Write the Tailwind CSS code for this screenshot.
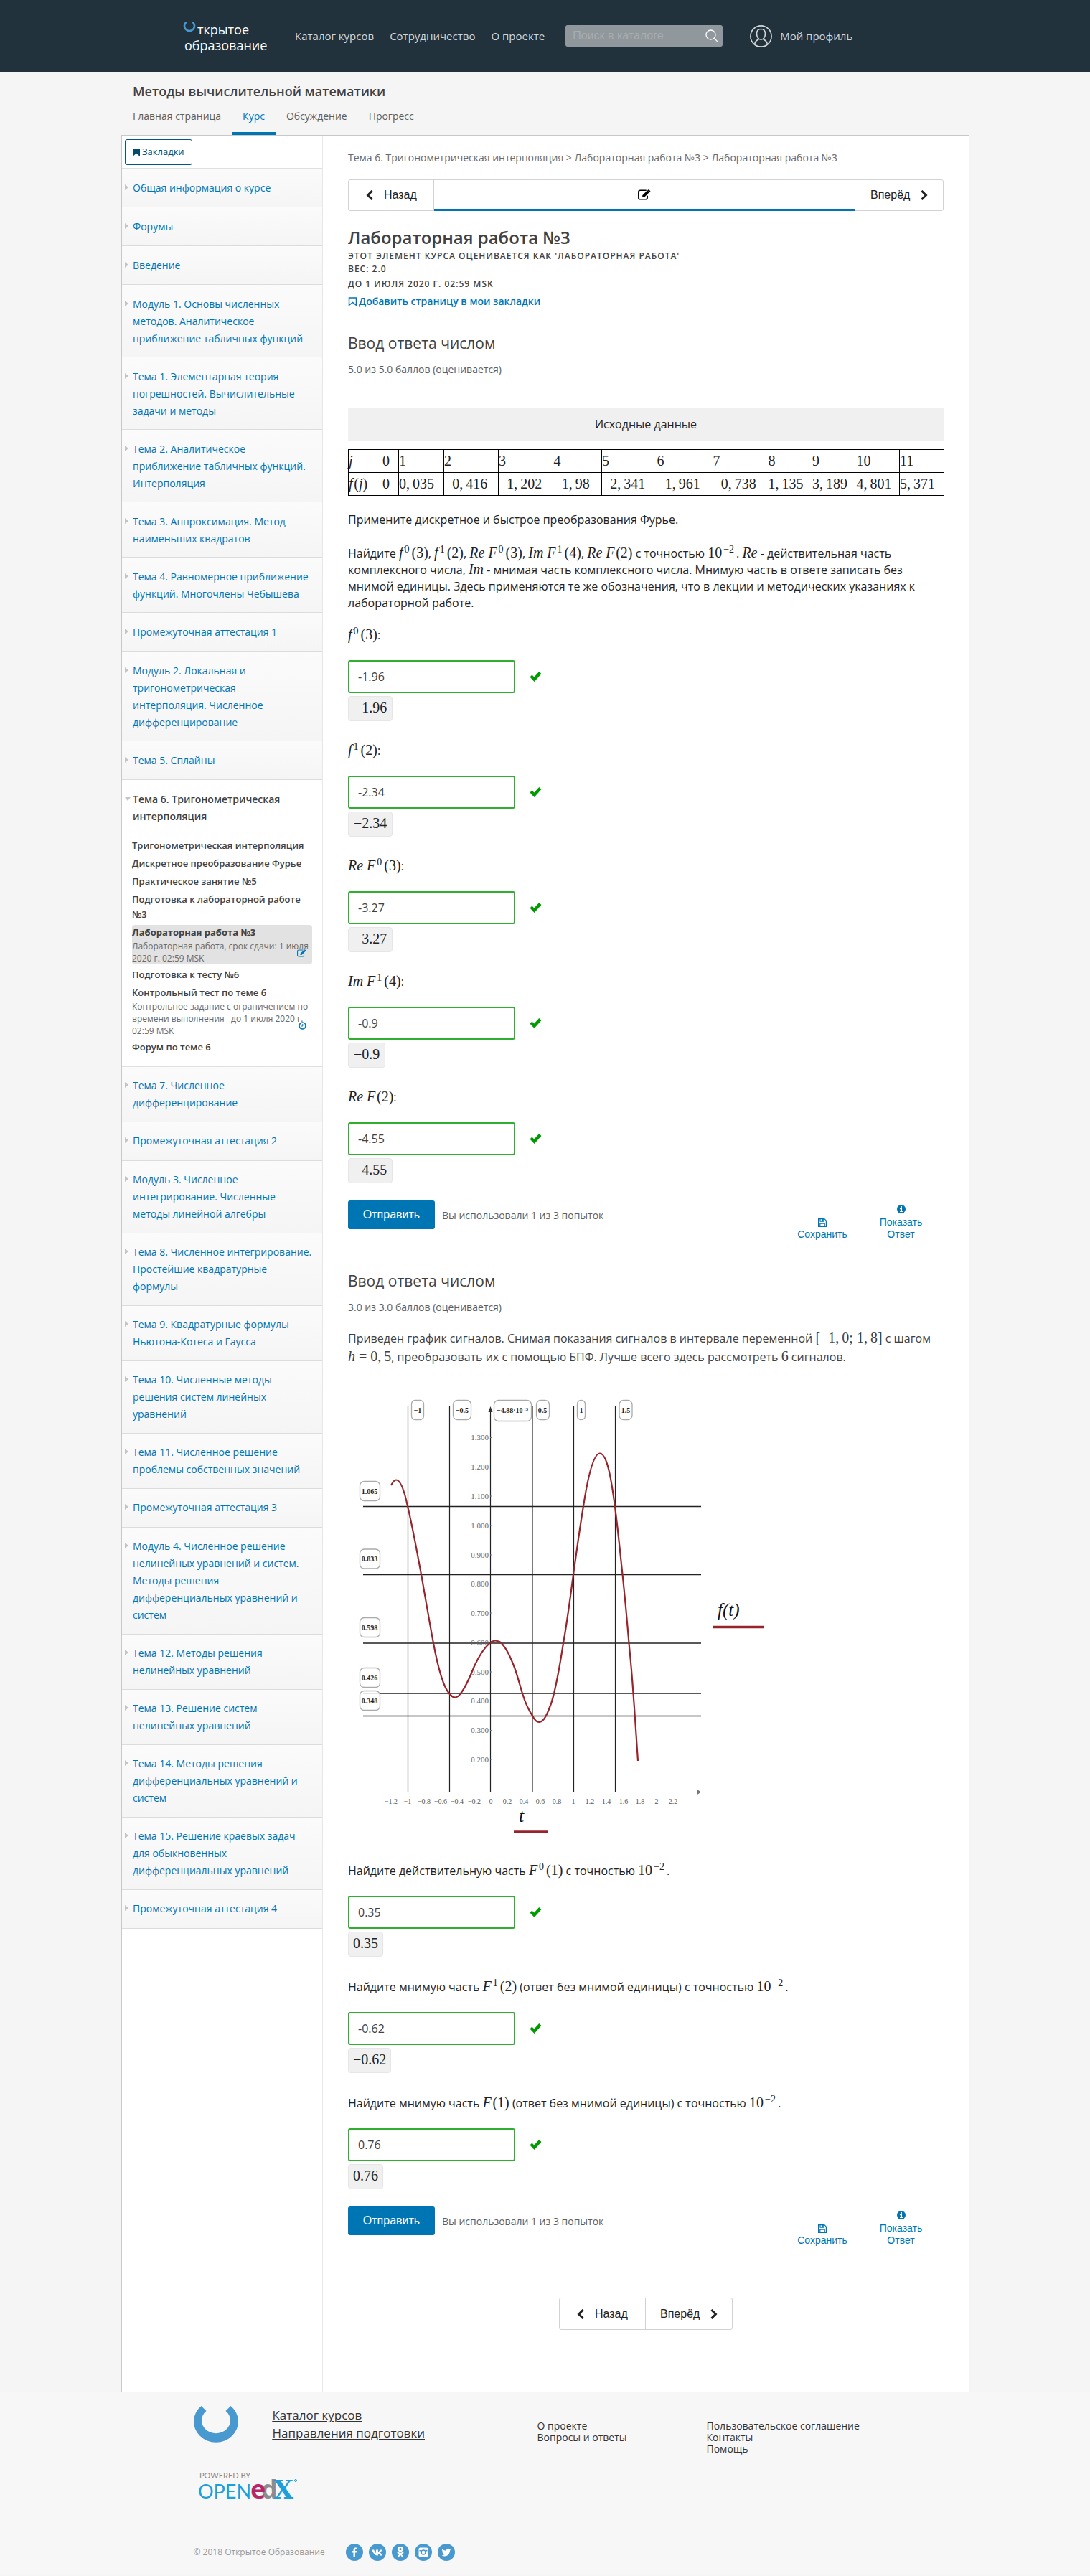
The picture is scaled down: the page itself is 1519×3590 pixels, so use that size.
<!DOCTYPE html>
<html lang="ru">
<head>
<meta charset="utf-8">
<meta name="viewport" content="width=device-width, initial-scale=1">
<title>Лабораторная работа №3 | Методы вычислительной математики</title>
<script src="https://cdn.jsdelivr.net/npm/@tailwindcss/browser@4"></script>
</head>
<body class="bg-[#f5f5f5] font-['Open_Sans','Noto_Sans',sans-serif] text-[#222]">

<!-- Shared icons -->
<svg class="hidden" aria-hidden="true">
  <symbol id="check" viewBox="0 0 17 14"><path d="M.5 7.600 3.400 4.600 6.400 7.400 13.200 0 16.500 3 6.600 14Z" fill="#009b00"/></symbol>
  <symbol id="left" viewBox="0 0 10 14"><path d="M8.6 1 2.6 7l6 6" fill="none" stroke="currentColor" stroke-width="3"/></symbol>
  <symbol id="right" viewBox="0 0 10 14"><path d="M1.4 1l6 6-6 6" fill="none" stroke="currentColor" stroke-width="3"/></symbol>
  <symbol id="edit" viewBox="0 0 18 15"><path d="M13.2 8.8v2.6a2.4 2.4 0 0 1-2.4 2.4H3.2A2.4 2.4 0 0 1 .8 11.400V3.600A2.400 2.400 0 0 1 3.200 1.200h7.200q.7 0 1.300.3" fill="none" stroke="currentColor" stroke-width="1.500"/><path d="M6.200 8.300 13.200 1.300l2.600 2.600-7 7H6.200ZM14 .6q.8-.8 1.600 0l1.400 1.400q.8.8 0 1.600l-.7.6L13.400 1.200Z" fill="currentColor"/></symbol>
  <symbol id="save" viewBox="0 0 12 12"><path d="M.6.6h8.200l2.600 2.600v8.200H.6ZM3 .6v3.600h5V.6M2.800 11.400V7.200h6.400v4.200" fill="none" stroke="currentColor" stroke-width="1.200"/><path d="M6 1h1.400v2.500H6z" fill="currentColor"/></symbol>
  <symbol id="info" viewBox="0 0 12 12"><circle cx="6" cy="6" r="6" fill="currentColor"/><path d="M5 2h2v1.700H5zM4 4.900h3v3.700h1V10H4V8.600h1V6.200H4z" fill="#fff"/></symbol>
</svg>

<header class="bg-[#21323d] text-[#d3d6d8]">
  <div class="mx-auto flex h-[100px] max-w-[1009px] items-center">
    <a href="#" class="relative block w-[120px] pt-1 text-[18px] leading-[22px] text-white">
      <svg class="absolute left-0 top-1 h-4 w-[19px]" viewBox="0 0 19 16" aria-hidden="true"><path d="M4.500.8a7 7 0 1 0 9 0" fill="none" stroke="#4799cf" stroke-width="2.600"/></svg>
      <span class="block pl-5">ткрытое</span>
      <span class="block pl-0.5">образование</span>
    </a>
    <nav class="ml-9 flex gap-[22px] text-[15px]">
      <a href="#">Каталог курсов</a>
      <a href="#">Сотрудничество</a>
      <a href="#">О проекте</a>
    </nav>
    <form class="ml-[29px] flex h-[30px] w-[219px] items-center rounded-[3px] bg-[#90989d] pl-[10px] pr-1.5" role="search">
      <input type="search" aria-label="Поиск в каталоге" placeholder="Поиск в каталоге" class="w-full min-w-0 font-['Liberation_Sans',sans-serif] text-[16px] outline-none placeholder:text-[#a9adad]">
      <button type="submit" aria-label="Найти"><svg class="size-[18px]" viewBox="0 0 18 18" fill="none" stroke="#fff" stroke-width="1.300"><circle cx="7.500" cy="7.500" r="6.500"/><path d="m12.200 12.200 5 5"/></svg></button>
    </form>
    <a href="#" class="ml-[38px] flex items-center gap-[11px] text-[15px]">
      <svg class="size-[31px]" viewBox="0 0 31 31" fill="none" stroke="#d3d6d8" stroke-width="1.600" aria-hidden="true"><circle cx="15.500" cy="15.500" r="14.600"/><path d="M15.500 5.500c4 0 6 2.600 6 6.500 0 4.300-2.400 8.300-6 8.300s-6-4-6-8.300c0-3.900 2-6.500 6-6.500Z"/><path d="M6.500 27c.6-4 2-5.600 6-7.200M24.500 27c-.6-4-2-5.600-6-7.200"/></svg>
      Мой профиль
    </a>
  </div>
</header>

<div class="mx-auto max-w-[1181px]">
  <h1 class="pt-[14px] pl-4 text-[18px] font-semibold leading-[26px] text-[#414141]">Методы вычислительной математики</h1>
  <nav class="flex h-12 text-[14px] leading-[44px] text-[#5e5e5e]">
    <a href="#" class="pl-4 pr-[15px]">Главная страница</a>
    <a href="#" class="border-b-4 border-[#0075b4] px-[15px] text-[#0075b4]">Курс</a>
    <a href="#" class="px-[15px]">Обсуждение</a>
    <a href="#" class="px-[15px]">Прогресс</a>
  </nav>

  <div class="flex border-l border-t border-[#c8c8c8] bg-white">
    <aside class="w-[280px] shrink-0 border-r border-[#e7e7e7]">
      <div class="h-[46px] border-b border-[#e0e0e0] pl-1 pt-[5px]">
        <a href="#" class="inline-flex h-9 items-center gap-[3px] rounded-[3px] border border-[#065683] px-[10px] text-[13px] text-[#074b6c]">
          <svg class="h-[11px] w-[10px]" viewBox="0 0 10 11" aria-hidden="true"><path d="M0 0h10v11L5 6.800 0 11Z" fill="currentColor"/></svg>Закладки
        </a>
      </div>
      <ul class="text-[14px] leading-6 text-[#0075b4] [&>li]:flex [&>li]:min-h-[54px] [&>li]:border-b [&>li]:border-[#dcdcdc] [&>li]:bg-linear-to-b [&>li]:from-[#fbfbfb] [&>li]:to-[#f5f5f5] [&>li]:pb-[13px] [&>li]:pt-[15px] [&>li]:pl-1 [&>li]:pr-[14px] [&>li]:before:mr-1.5 [&>li]:before:mt-[7px] [&>li]:before:h-0 [&>li]:before:shrink-0 [&>li]:before:border-y-4 [&>li]:before:border-l-[5px] [&>li]:before:border-y-transparent [&>li]:before:border-l-[#c4c4c4] [&>li]:before:content-['']">
        <li><a href="#">Общая информация о курсе</a></li>
        <li><a href="#">Форумы</a></li>
        <li><a href="#">Введение</a></li>
        <li><a href="#">Модуль 1. Основы численных методов. Аналитическое приближение табличных функций</a></li>
        <li><a href="#">Тема 1. Элементарная теория погрешностей. Вычислительные задачи и методы</a></li>
        <li><a href="#">Тема 2. Аналитическое приближение табличных функций. Интерполяция</a></li>
        <li><a href="#">Тема 3. Аппроксимация. Метод наименьших квадратов</a></li>
        <li><a href="#">Тема 4. Равномерное приближение функций. Многочлены Чебышева</a></li>
        <li><a href="#">Промежуточная аттестация 1</a></li>
        <li><a href="#">Модуль 2. Локальная и тригонометрическая интерполяция. Численное дифференцирование</a></li>
        <li><a href="#">Тема 5. Сплайны</a></li>
      </ul>
      <section class="border-b border-[#e0e0e0] pb-4 pt-[15px] text-[#414141]">
        <h2 class="flex gap-1 pl-1 text-[14px] font-semibold leading-6 before:mt-[9px] before:h-0 before:border-x-[4px] before:border-t-[5px] before:border-x-transparent before:border-t-[#c4c4c4] before:content-['']"><span class="-ml-px pr-8">Тема 6. Тригонометрическая интерполяция</span></h2>
        <ul class="mt-[18px] flex flex-col gap-1 pl-[14px] pr-[14px] text-[13px] font-semibold leading-[21px]">
          <li><a href="#">Тригонометрическая интерполяция</a></li>
          <li><a href="#">Дискретное преобразование Фурье</a></li>
          <li><a href="#">Практическое занятие №5</a></li>
          <li><a href="#">Подготовка к лабораторной работе №3</a></li>
          <li class="relative rounded-[4px] bg-[#e2e2e2]"><a href="#" class="font-bold">Лабораторная работа №3<span class="block text-[12px] font-normal leading-[17px] text-[#6a6a6a]">Лабораторная работа, срок сдачи: 1 июля 2020 г. 02:59 MSK</span></a><svg class="absolute bottom-[10px] right-2 h-[11px] w-[13px] text-[#0075b4]" aria-hidden="true"><use href="#edit"/></svg></li>
          <li><a href="#">Подготовка к тесту №6</a></li>
          <li class="relative"><a href="#">Контрольный тест по теме 6<span class="block text-[12px] font-normal leading-[17px] text-[#6a6a6a]">Контрольное задание с ограничением по времени выполнения &nbsp; до 1 июля 2020 г. 02:59 MSK</span></a><svg class="absolute bottom-[10px] right-2 size-[11px]" viewBox="0 0 11 11" fill="none" stroke="#0075b4" stroke-width="1.700" aria-hidden="true"><circle cx="5.500" cy="5.500" r="4.500"/><path d="M5.800 3v3H4" stroke-width="1"/></svg></li>
          <li><a href="#">Форум по теме 6</a></li>
        </ul>
      </section>
      <ul class="text-[14px] leading-6 text-[#0075b4] [&>li]:flex [&>li]:min-h-[54px] [&>li]:border-b [&>li]:border-[#dcdcdc] [&>li]:bg-linear-to-b [&>li]:from-[#fbfbfb] [&>li]:to-[#f5f5f5] [&>li]:py-[14px] [&>li]:pl-1 [&>li]:pr-[14px] [&>li]:before:mr-1.5 [&>li]:before:mt-[7px] [&>li]:before:h-0 [&>li]:before:shrink-0 [&>li]:before:border-y-4 [&>li]:before:border-l-[5px] [&>li]:before:border-y-transparent [&>li]:before:border-l-[#c4c4c4] [&>li]:before:content-['']">
        <li><a href="#">Тема 7. Численное дифференцирование</a></li>
        <li><a href="#">Промежуточная аттестация 2</a></li>
        <li><a href="#">Модуль 3. Численное интегрирование. Численные методы линейной алгебры</a></li>
        <li><a href="#">Тема 8. Численное интегрирование. Простейшие квадратурные формулы</a></li>
        <li><a href="#">Тема 9. Квадратурные формулы Ньютона-Котеса и Гаусса</a></li>
        <li><a href="#">Тема 10. Численные методы решения систем линейных уравнений</a></li>
        <li><a href="#">Тема 11. Численное решение проблемы собственных значений</a></li>
        <li><a href="#">Промежуточная аттестация 3</a></li>
        <li><a href="#">Модуль 4. Численное решение нелинейных уравнений и систем. Методы решения дифференциальных уравнений и систем</a></li>
        <li><a href="#">Тема 12. Методы решения нелинейных уравнений</a></li>
        <li><a href="#">Тема 13. Решение систем нелинейных уравнений</a></li>
        <li><a href="#">Тема 14. Методы решения дифференциальных уравнений и систем</a></li>
        <li><a href="#">Тема 15. Решение краевых задач для обыкновенных дифференциальных уравнений</a></li>
        <li><a href="#">Промежуточная аттестация 4</a></li>
      </ul>
    </aside>

    <main class="min-w-0 flex-1 px-[35px] pb-[86px] pt-[21px] [&_var]:font-['Liberation_Serif',serif] [&_var]:text-[20px] [&_var]:leading-none [&_var]:not-italic [&_sup]:-top-[7px] [&_sup]:ml-0.5 [&_sup]:mr-[3px] [&_sup]:text-[14px]">
      <p class="text-[14px] leading-5 text-[#6a6a6a]">Тема 6. Тригонометрическая интерполяция &gt; Лабораторная работа №3 &gt; Лабораторная работа №3</p>

      <nav class="mt-5 flex h-11 rounded-[3px] border border-[#d2d2d2] font-['Liberation_Sans',sans-serif] text-[16px] text-[#222]">
        <button class="flex w-[119px] items-center gap-[15px] border-r border-[#d2d2d2] pl-6"><svg class="h-[14px] w-[10px]" aria-hidden="true"><use href="#left"/></svg>Назад</button>
        <button class="-mb-px flex flex-1 items-center justify-center border-b-[3px] border-[#0075b4] text-black" aria-label="Лабораторная работа №3"><svg class="h-[15px] w-[18px]"><use href="#edit"/></svg></button>
        <button class="flex w-[123px] items-center gap-[15px] border-l border-[#d2d2d2] pl-[21px]">Вперёд<svg class="h-[14px] w-[10px]" aria-hidden="true"><use href="#right"/></svg></button>
      </nav>

      <h2 class="mt-[21px] text-[24px] font-semibold leading-8 text-[#414141]">Лабораторная работа №3</h2>
      <p class="mt-px text-[12px] font-semibold uppercase leading-[18px] tracking-[1px] text-[#414141]">Этот элемент курса оценивается как 'Лабораторная работа'<br>Вес: 2.0</p>
      <p class="mt-[3px] text-[12px] font-semibold uppercase leading-[18px] tracking-[1px] text-[#414141]">до 1 июля 2020 г. 02:59 MSK</p>
      <button class="mt-[5px] flex items-center gap-0.5 text-[14px] font-semibold leading-5 text-[#0075b4]"><svg class="h-3 w-[13px]" viewBox="0 0 13 12" aria-hidden="true"><path d="M1.500 1h10v10.300L6.500 7.500l-5 3.800Z" fill="none" stroke="currentColor" stroke-width="1.500"/></svg>Добавить страницу в мои закладки</button>

      <section>
        <h3 class="mt-[33px] text-[21px] leading-[30px] text-[#414141]">Ввод ответа числом</h3>
        <p class="mt-3 text-[14px] leading-5 text-[#5e5e5e]">5.0 из 5.0 баллов (оценивается)</p>

        <table class="mt-[43px] w-full table-fixed border-collapse text-left [&_td]:py-0 [&_th]:font-normal">
          <caption class="mb-3 h-[46px] bg-[#f0f0f0] text-center text-[16px] leading-[46px]">Исходные данные</caption>
          <colgroup><col class="w-[47px]"><col class="w-[23px]"><col class="w-[63px]"><col class="w-[76px]"><col class="w-[77px]"><col class="w-[67px]"><col class="w-[77px]"><col class="w-[78px]"><col class="w-[77px]"><col class="w-[61px]"><col class="w-[62px]"><col class="w-[60px]"><col></colgroup>
          <tbody class="[&>tr]:h-8 [&>tr]:whitespace-nowrap [&>tr]:border-y [&>tr]:border-black [&_.b]:border-l [&_.b]:border-black">
            <tr><th scope="row" class="b"><var><i>j</i></var></th><td class="b"><var>0</var></td><td class="b"><var>1</var></td><td class="b"><var>2</var></td><td class="b"><var>3</var></td><td><var>4</var></td><td class="b"><var>5</var></td><td><var>6</var></td><td><var>7</var></td><td><var>8</var></td><td class="b"><var>9</var></td><td><var>10</var></td><td class="b"><var>11</var></td></tr>
            <tr><th scope="row" class="b"><var><i>f</i>&#8202;(<i>j</i>)</var></th><td class="b"><var>0</var></td><td class="b"><var>0,&#8201;035</var></td><td class="b"><var>−0,&#8201;416</var></td><td class="b"><var>−1,&#8201;202</var></td><td><var>−1,&#8201;98</var></td><td class="b"><var>−2,&#8201;341</var></td><td><var>−1,&#8201;961</var></td><td><var>−0,&#8201;738</var></td><td><var>1,&#8201;135</var></td><td class="b"><var>3,&#8201;189</var></td><td><var>4,&#8201;801</var></td><td class="b"><var>5,&#8201;371</var></td></tr>
          </tbody>
        </table>

        <p class="mt-[22px] text-[16px] leading-[23px]">Примените дискретное и быстрое преобразования Фурье.</p>
        <p class="mt-6 text-[16px] leading-[23px]">Найдите <var><i>f</i><sup>0</sup>(3)</var>, <var><i>f</i><sup>1</sup>(2)</var>, <var><i>Re F</i><sup>0</sup>(3)</var>, <var><i>Im F</i><sup>1</sup>(4)</var>, <var><i>Re F</i>&#8202;(2)</var> с точностью <var>10<sup>−2</sup></var>. <var><i>Re</i></var> - действительная часть комплексного числа, <var><i>Im</i></var> - мнимая часть комплексного числа. Мнимую часть в ответе записать без мнимой единицы. Здесь применяются те же обозначения, что в лекции и методических указаниях к лабораторной работе.</p>

        <div class="mt-[22px] flex flex-col gap-[30px] text-[16px] leading-[23px] [&_input]:h-[46px] [&_input]:w-[233px] [&_input]:rounded-[3px] [&_input]:border-2 [&_input]:border-[#2fae2f] [&_input]:bg-white [&_input]:px-3 [&_input]:text-[#414141] [&_label]:block [&_output]:mt-1 [&_output]:block [&_output]:h-[35px] [&_output]:w-fit [&_output]:rounded-[4px] [&_output]:border [&_output]:border-[#e6e6e6] [&_output]:bg-[#f0f0f0] [&_output]:px-[7px] [&_output]:leading-8">
          <div><label for="a1"><var><i>f</i><sup>0</sup>(3)</var>:</label><div class="mt-[23px] flex items-center gap-5"><input id="a1" value="-1.96"><svg class="h-[14px] w-[17px]" role="img" aria-label="верно"><use href="#check"/></svg></div><output for="a1"><var>−1.96</var></output></div>
          <div><label for="a2"><var><i>f</i><sup>1</sup>(2)</var>:</label><div class="mt-[23px] flex items-center gap-5"><input id="a2" value="-2.34"><svg class="h-[14px] w-[17px]" role="img" aria-label="верно"><use href="#check"/></svg></div><output for="a2"><var>−2.34</var></output></div>
          <div><label for="a3"><var><i>Re F</i><sup>0</sup>(3)</var>:</label><div class="mt-[23px] flex items-center gap-5"><input id="a3" value="-3.27"><svg class="h-[14px] w-[17px]" role="img" aria-label="верно"><use href="#check"/></svg></div><output for="a3"><var>−3.27</var></output></div>
          <div><label for="a4"><var><i>Im F</i><sup>1</sup>(4)</var>:</label><div class="mt-[23px] flex items-center gap-5"><input id="a4" value="-0.9"><svg class="h-[14px] w-[17px]" role="img" aria-label="верно"><use href="#check"/></svg></div><output for="a4"><var>−0.9</var></output></div>
          <div><label for="a5"><var><i>Re F</i>&#8202;(2)</var>:</label><div class="mt-[23px] flex items-center gap-5"><input id="a5" value="-4.55"><svg class="h-[14px] w-[17px]" role="img" aria-label="верно"><use href="#check"/></svg></div><output for="a5"><var>−4.55</var></output></div>
        </div>

        <div class="mt-6 flex h-[82px] items-start border-b border-[#ddd]">
          <button class="h-10 w-[121px] rounded-[3px] bg-[#0075b4] font-['Liberation_Sans',sans-serif] text-[16px] text-white">Отправить</button>
          <p class="ml-[10px] text-[14px] leading-[41px] text-[#5e5e5e]">Вы использовали 1 из 3 попыток</p>
          <div class="ml-auto mt-[11px] flex h-[54px] font-['Liberation_Sans',sans-serif] text-[14px] leading-[17px] text-[#0075b4]">
            <button class="flex w-[99px] flex-col items-center justify-end border-r border-[#ededed] pb-[9px]"><svg class="mb-0.5 size-3 shrink-0" aria-hidden="true"><use href="#save"/></svg>Сохранить</button>
            <button class="flex w-[119px] flex-col items-center justify-end pb-[9px]"><svg class="mb-1 size-3 shrink-0" aria-hidden="true"><use href="#info"/></svg>Показать<br>Ответ</button>
          </div>
        </div>
      </section>

      <section>
        <h3 class="mt-[15px] text-[21px] leading-[30px] text-[#414141]">Ввод ответа числом</h3>
        <p class="mt-3 text-[14px] leading-5 text-[#5e5e5e]">3.0 из 3.0 баллов (оценивается)</p>
        <p class="mt-5 text-[16px] leading-[26px] text-[#414141]">Приведен график сигналов. Снимая показания сигналов в интервале переменной <var>[−1,&#8201;0; 1,&#8201;8]</var> с шагом <var class="whitespace-nowrap"><i>h</i> = 0,&#8201;5</var>, преобразовать их с помощью БПФ. Лучше всего здесь рассмотреть <var>6</var> сигналов.</p>

        <svg class="mt-[26px] block w-full max-w-[620px] font-['Liberation_Serif',serif]" viewBox="5 0 620 640" role="img" aria-label="График f(t)">
          <g stroke="#222" stroke-width="1.200">
            <path d="M88.500 29V567M146.500 29V567M203.500 34V567M262 29V567M319.500 29V567M377.500 29V567"/>
            <path d="M26 169.500H497M26 264.500H497M26 360H497M26 430H497M26 461.500H497" stroke-width="1.600"/>
            <path d="M203 73.500h3M203 114.500h3M203 155h3M203 196h3M203 237h3M203 277.500h3M203 318h3M203 400h3M203 440.500h3M203 481.500h3M203 522h3" stroke="#777"/>
          </g>
          <path d="M26 567.500H492" stroke="#999"/><path d="M491 563.500 497 567.500 491 571.500Z" fill="#777"/><path d="M200.500 38 203.500 30 206.500 38Z" fill="#333"/>
          <g font-size="11" fill="#666" text-anchor="end">
            <text x="201" y="77">1.300</text><text x="201" y="118">1.200</text><text x="201" y="159">1.100</text><text x="201" y="200">1.000</text><text x="201" y="241">0.900</text><text x="201" y="281">0.800</text><text x="201" y="322">0.700</text><text x="201" y="363">0.600</text><text x="201" y="404">0.500</text><text x="201" y="444">0.400</text><text x="201" y="485">0.300</text><text x="201" y="526">0.200</text>
          </g>
          <g font-size="10" fill="#555" text-anchor="middle">
            <text x="65" y="584">−1.2</text><text x="88" y="584">−1</text><text x="111" y="584">−0.8</text><text x="134" y="584">−0.6</text><text x="157" y="584">−0.4</text><text x="181" y="584">−0.2</text><text x="204" y="584">0</text><text x="227" y="584">0.2</text><text x="250" y="584">0.4</text><text x="273" y="584">0.6</text><text x="296" y="584">0.8</text><text x="319" y="584">1</text><text x="342" y="584">1.2</text><text x="365" y="584">1.4</text><text x="389" y="584">1.6</text><text x="412" y="584">1.8</text><text x="435" y="584">2</text><text x="458" y="584">2.2</text>
          </g>
          <g fill="#fff" fill-opacity=".85" stroke="#aaa" stroke-width="1.300">
            <rect x="93.500" y="21.500" width="17" height="27" rx="5"/><rect x="151.500" y="21.500" width="25" height="27" rx="6"/><rect x="208.500" y="21.500" width="52" height="29" rx="6"/><rect x="267.500" y="21.500" width="18" height="27" rx="6"/><rect x="324.500" y="21.500" width="11" height="27" rx="5"/><rect x="383" y="21.500" width="18" height="27" rx="6"/>
            <rect x="21.500" y="134.500" width="28" height="27" rx="6"/><rect x="21.500" y="229" width="28" height="27" rx="6"/><rect x="21.500" y="324.500" width="28" height="27" rx="6"/><rect x="21.500" y="394.500" width="28" height="27" rx="6"/><rect x="21.500" y="426.500" width="28" height="27" rx="6"/>
          </g>
          <g font-size="10" font-weight="bold" fill="#222" text-anchor="middle">
            <text x="102" y="39">−1</text><text x="164" y="39">−0.5</text><text x="234" y="39">−4.88·10<tspan dy="-3" font-size="7">−3</tspan></text><text x="276" y="39">0.5</text><text x="330" y="39">1</text><text x="392" y="39">1.5</text>
            <text x="35" y="152">1.065</text><text x="35" y="246">0.833</text><text x="35" y="342">0.598</text><text x="35" y="412">0.426</text><text x="35" y="444">0.348</text>
          </g>
          <path d="M65 140C67 136 69 132.500 72 132.500C79 132.500 84 150 88 169C95 198 101 232 107 264C112 292 118 328 124 360C130 392 138 421 146 430C149 434 151 435.500 154 435.500C157 435.500 160 433 162 430C169 421 175 407 181 392C188 377 195 366 203 359.500C206 357 208 356.500 210 356.500C215 356.500 219 359 222 364C228 371 232 381 237 394C241 405 244 417 248 430C252 443 257 454 262 461C265 467 268 470 271 470C275 470 278 467 281 461C285 453 289 444 292 430C297 409 301 386 305 360C311 326 315 295 319 264C324 229 328 199 333 169C339 130 347 95.500 356 95.500C366 95.500 372 132 377 170C381 200 384 232 387.500 264C391 297 394 330 396.500 360C399 385 401 408 402.500 430C405 462 407 495 409 524" fill="none" stroke="#97242b" stroke-width="2.200"/>
          <path d="M514 337.500H584M236 623H283" stroke="#97242b" stroke-width="3.600"/>
          <text x="520" y="322" font-size="25" font-style="italic" fill="#111">f(t)</text>
          <text x="243" y="609" font-size="26" font-style="italic" fill="#111">t</text>
        </svg>

        <div class="mt-[26px] flex flex-col gap-[31px] text-[16px] leading-[23px] [&_input]:h-[46px] [&_input]:w-[233px] [&_input]:rounded-[3px] [&_input]:border-2 [&_input]:border-[#2fae2f] [&_input]:bg-white [&_input]:px-3 [&_input]:text-[#414141] [&_label]:block [&_output]:mt-1 [&_output]:block [&_output]:h-[35px] [&_output]:w-fit [&_output]:rounded-[4px] [&_output]:border [&_output]:border-[#e6e6e6] [&_output]:bg-[#f0f0f0] [&_output]:px-1.5 [&_output]:leading-8">
          <div><label for="b1">Найдите действительную часть <var><i>F</i><sup>0</sup>(1)</var> с точностью <var>10<sup>−2</sup></var>.</label><div class="mt-[23px] flex items-center gap-5"><input id="b1" value="0.35"><svg class="h-[14px] w-[17px]" role="img" aria-label="верно"><use href="#check"/></svg></div><output for="b1"><var>0.35</var></output></div>
          <div><label for="b2">Найдите мнимую часть <var><i>F</i><sup>1</sup>(2)</var> (ответ без мнимой единицы) с точностью <var>10<sup>−2</sup></var>.</label><div class="mt-[23px] flex items-center gap-5"><input id="b2" value="-0.62"><svg class="h-[14px] w-[17px]" role="img" aria-label="верно"><use href="#check"/></svg></div><output for="b2"><var>−0.62</var></output></div>
          <div><label for="b3">Найдите мнимую часть <var><i>F</i>&#8202;(1)</var> (ответ без мнимой единицы) с точностью <var>10<sup>−2</sup></var>.</label><div class="mt-[23px] flex items-center gap-5"><input id="b3" value="0.76"><svg class="h-[14px] w-[17px]" role="img" aria-label="верно"><use href="#check"/></svg></div><output for="b3"><var>0.76</var></output></div>
        </div>

        <div class="mt-6 flex h-[82px] items-start border-b border-[#ddd]">
          <button class="h-10 w-[121px] rounded-[3px] bg-[#0075b4] font-['Liberation_Sans',sans-serif] text-[16px] text-white">Отправить</button>
          <p class="ml-[10px] text-[14px] leading-[41px] text-[#5e5e5e]">Вы использовали 1 из 3 попыток</p>
          <div class="ml-auto mt-[11px] flex h-[54px] font-['Liberation_Sans',sans-serif] text-[14px] leading-[17px] text-[#0075b4]">
            <button class="flex w-[99px] flex-col items-center justify-end border-r border-[#ededed] pb-[9px]"><svg class="mb-0.5 size-3 shrink-0" aria-hidden="true"><use href="#save"/></svg>Сохранить</button>
            <button class="flex w-[119px] flex-col items-center justify-end pb-[9px]"><svg class="mb-1 size-3 shrink-0" aria-hidden="true"><use href="#info"/></svg>Показать<br>Ответ</button>
          </div>
        </div>
      </section>

      <nav class="mx-auto mt-[45px] flex h-[45px] w-[242px] rounded-[3px] border border-[#d2d2d2] font-['Liberation_Sans',sans-serif] text-[16px] text-[#222]">
        <button class="flex w-[120px] items-center gap-[15px] border-r border-[#d2d2d2] pl-6"><svg class="h-[14px] w-[10px]" aria-hidden="true"><use href="#left"/></svg>Назад</button>
        <button class="flex flex-1 items-center gap-[15px] pl-5">Вперёд<svg class="h-[14px] w-[10px]" aria-hidden="true"><use href="#right"/></svg></button>
      </nav>
    </main>
  </div>
</div>

<footer class="border-t border-[#ececec] bg-[#f7f7f7] text-[#333]">
  <div class="mx-auto max-w-[980px] pb-[18px] pt-[19px]">
    <div class="flex items-start">
      <svg class="h-[53px] w-[62px]" viewBox="0 0 62 53" aria-hidden="true"><path d="M10.500 0 17.500 7A20 18 0 1 0 44.500 7L51.500 0A31 29 0 1 1 10.500 0Z" fill="#4799cf"/></svg>
      <div class="ml-12 flex w-[326px] flex-col items-start text-[17px] leading-[25px] underline underline-offset-2">
        <a href="#">Каталог курсов</a>
        <a href="#">Направления подготовки</a>
      </div>
      <div class="mt-[15px] h-[42px] border-l border-[#ccc]"></div>
      <div class="ml-[42px] mt-5 flex w-[236px] flex-col text-[14px] leading-4">
        <a href="#">О проекте</a>
        <a href="#">Вопросы и ответы</a>
      </div>
      <div class="mt-5 flex flex-col text-[14px] leading-4">
        <a href="#">Пользовательское соглашение</a>
        <a href="#">Контакты</a>
        <a href="#">Помощь</a>
      </div>
    </div>
    <a href="#" class="ml-1.5 mt-6 block w-fit" aria-label="Powered by Open edX">
      <svg class="h-10 w-[144px] overflow-visible" viewBox="0 0 144 40">
        <text x="2" y="9" font-family="Lato, sans-serif" font-size="11" fill="#888">POWERED BY</text>
        <text x="0" y="37" font-family="Lato, sans-serif" font-size="27" font-weight="400" fill="#1e9fda">OPEN</text>
        <text x="88" y="37" font-family="Open Sans, sans-serif" font-size="36" font-weight="bold" fill="#8a8c8f">d</text>
        <text x="73" y="37" font-family="Open Sans, sans-serif" font-size="36" font-weight="bold" fill="#b72667">e</text>
        <text x="105" y="37" font-family="DejaVu Serif, serif" font-size="36" font-weight="bold" fill="#1e9fda">X</text>
        <circle cx="136" cy="12" r="1.500" fill="none" stroke="#1e9fda"/>
      </svg>
    </a>
    <div class="mt-[60px] flex items-center">
      <p class="text-[12px] text-[#999]">© 2018 Открытое Образование</p>
      <div class="ml-[29px] flex gap-2">
        <a href="#" aria-label="Facebook"><svg class="size-6" viewBox="0 0 24 24"><circle cx="12" cy="12" r="12" fill="#4799cf"/><path d="M10.500 19v-6.500H8.800V10h1.700V8.400q0-2.800 2.800-2.800h1.700V8h-1.200q-.9 0-.9.9V10h2.200l-.3 2.500h-1.900V19Z" fill="#fff"/></svg></a>
        <a href="#" aria-label="ВКонтакте"><svg class="size-6" viewBox="0 0 24 24"><circle cx="12" cy="12" r="12" fill="#4799cf"/><path d="M12 16.500Q7 16.500 4.300 8.500h2.900q1 3.400 2.700 4.600V8.500h3v3.200q1.500-.7 2.700-3.200h2.900q-.8 2.400-2.700 3.900 2 1.200 3.200 4.100h-3.100q-1-2.200-3-2.700v2.700Z" fill="#fff"/></svg></a>
        <a href="#" aria-label="Одноклассники"><svg class="size-6" viewBox="0 0 24 24"><circle cx="12" cy="12" r="12" fill="#4799cf"/><g fill="none" stroke="#fff" stroke-width="2" stroke-linecap="round"><circle cx="12" cy="7.600" r="2.700"/><path d="M8.500 12.700q3.500 2 7 0M12 14l-3.200 4.300M12 14l3.200 4.300"/></g></svg></a>
        <a href="#" aria-label="Instagram"><svg class="size-6" viewBox="0 0 24 24"><circle cx="12" cy="12" r="12" fill="#4799cf"/><rect x="5.500" y="5.500" width="13" height="13" rx="2" fill="#fff"/><path d="M6.500 9.800h2.700M14.800 9.800h2.700M14.500 7.500h2.200" stroke="#4799cf" stroke-width="1.400"/><circle cx="12" cy="12" r="3" fill="none" stroke="#4799cf" stroke-width="1.400"/></svg></a>
        <a href="#" aria-label="Twitter"><svg class="size-6" viewBox="0 0 24 24"><circle cx="12" cy="12" r="12" fill="#4799cf"/><path d="M18.500 8q-.7.400-1.500.5.800-.5 1.100-1.400-.8.500-1.600.6a2.700 2.700 0 0 0-4.600 2.400q-3.400-.2-5.500-2.800-1.200 2.200.8 3.600-.6 0-1.200-.3 0 2 2.100 2.600-.6.200-1.200 0 .6 1.800 2.500 1.900-1.700 1.300-3.900 1.100 4 2.400 7.900.2 3.700-2.300 3.700-7 .8-.5 1.400-1.400Z" fill="#fff"/></svg></a>
      </div>
    </div>
  </div>
</footer>
</body>
</html>
